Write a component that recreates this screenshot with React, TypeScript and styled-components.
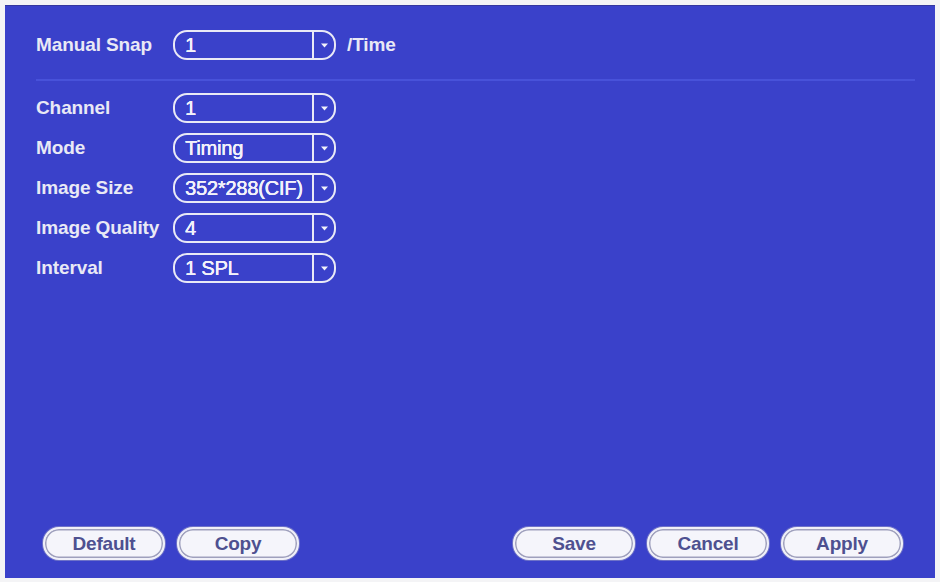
import React from "react";
import styled, { createGlobalStyle } from "styled-components";

const Global = createGlobalStyle`
  html, body { margin: 0; padding: 0; background: #ffffff; }
  body { font-family: "Liberation Sans", Arial, sans-serif; }
`;

const Page = styled.div`
  width: 940px;
  height: 582px;
  box-sizing: border-box;
  padding: 5px 5px 4px 5px;
  background: #f4f4f6;
`;

const Panel = styled.div`
  height: 100%;
  box-sizing: border-box;
  background: #3a41ca;
  border-top: 1px solid #34379f;
  display: flex;
  flex-direction: column;
  padding: 24px 20px 18px 31px;
`;

const Row = styled.div`
  display: flex;
  align-items: center;
  height: 30px;
`;

const Label = styled.div`
  width: 137px;
  flex: none;
  color: #e9e9f5;
  font-size: 19px;
  font-weight: 700;
  letter-spacing: -0.1px;
  white-space: nowrap;
`;

const Suffix = styled.div`
  margin-left: 11px;
  color: #e9e9f5;
  font-size: 19px;
  font-weight: 700;
  letter-spacing: -0.1px;
`;

const Select = styled.div`
  width: 163px;
  height: 30px;
  box-sizing: border-box;
  border: 2px solid #e9e9f6;
  border-radius: 14px;
  display: flex;
  align-items: stretch;
  overflow: hidden;
`;

const SelectValue = styled.div`
  flex: 1;
  display: flex;
  align-items: center;
  padding-left: 10px;
  color: #f2f2fa;
  font-size: 20px;
  font-weight: 400;
  text-shadow: 0 0 0.6px #f2f2fa, 0.3px 0 0 #f2f2fa;
  letter-spacing: -0.2px;
  white-space: nowrap;
  overflow: hidden;
`;

const SelectArrow = styled.div`
  width: 20px;
  flex: none;
  border-left: 2px solid #e9e9f6;
  display: flex;
  align-items: center;
  justify-content: center;
`;

const Divider = styled.div`
  height: 2px;
  background: #4852da;
  margin: 19px 0 12px 0;
`;

const Fields = styled.div`
  display: flex;
  flex-direction: column;
  gap: 10px;
`;

const Spacer = styled.div`
  flex: 1;
`;

const ButtonBar = styled.div`
  display: flex;
  align-items: center;
  padding-left: 7px;
  padding-right: 12px;
`;

const Group = styled.div`
  display: flex;
  gap: 12px;
`;

const Button = styled.div`
  width: 122px;
  height: 33px;
  box-sizing: border-box;
  border-radius: 16px;
  background: #f5f5fb;
  border: 2px solid #f0f0f8;
  box-shadow: inset 0 0 0 1.5px #9fa0bd, 0 0 0 1px #6e72c8;
  display: flex;
  align-items: center;
  justify-content: center;
  color: #4e5090;
  font-size: 19px;
  font-weight: 700;
  letter-spacing: -0.2px;
`;

const Arrow = () => (
  <svg width="9" height="7" viewBox="0 0 9 7">
    <path d="M1 1.5 L8 1.5 L4.5 5.5 Z" fill="#f2f2fa" />
  </svg>
);

const Dropdown = ({ value }: { value: string }) => (
  <Select>
    <SelectValue>{value}</SelectValue>
    <SelectArrow>
      <Arrow />
    </SelectArrow>
  </Select>
);

const fields: [string, string][] = [
  ["Channel", "1"],
  ["Mode", "Timing"],
  ["Image Size", "352*288(CIF)"],
  ["Image Quality", "4"],
  ["Interval", "1 SPL"],
];

export default function App() {
  return (
    <>
      <Global />
      <Page>
        <Panel>
          <Row>
            <Label>Manual Snap</Label>
            <Dropdown value="1" />
            <Suffix>/Time</Suffix>
          </Row>
          <Divider />
          <Fields>
            {fields.map(([l, v]) => (
              <Row key={l}>
                <Label>{l}</Label>
                <Dropdown value={v} />
              </Row>
            ))}
          </Fields>
          <Spacer />
          <ButtonBar>
            <Group>
              <Button>Default</Button>
              <Button>Copy</Button>
            </Group>
            <Spacer />
            <Group>
              <Button>Save</Button>
              <Button>Cancel</Button>
              <Button>Apply</Button>
            </Group>
          </ButtonBar>
        </Panel>
      </Page>
    </>
  );
}
